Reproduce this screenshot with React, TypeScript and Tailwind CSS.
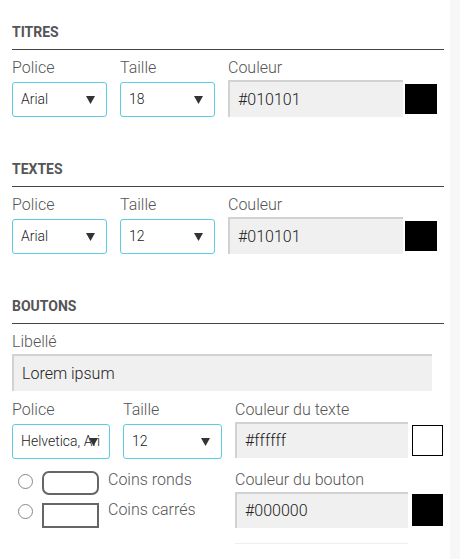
import React from 'react'

const font = { fontFamily: 'Roboto, "Open Sans", Arial, sans-serif' }

function Arrow() {
  return (
    <svg className="absolute right-[11px] top-1/2 -translate-y-1/2" width="9" height="8" viewBox="0 0 9 8">
      <polygon points="0,0 9,0 4.5,8" fill="#333" />
    </svg>
  )
}

function Select({ value, width }: { value: string; width: string }) {
  return (
    <div className={`relative h-[35px] mt-1 ${width} rounded-[3px] border border-[#5ccbe4] bg-white flex items-center pl-2`}>
      <span className="text-[14px] font-light text-[#222] whitespace-nowrap">{value}</span>
      <Arrow />
    </div>
  )
}

function ColorInput({ value, width, swatch }: { value: string; width: string; swatch: string }) {
  return (
    <div className="flex items-center gap-[2px]">
      <div className={`h-[37px] ${width} bg-[#f0f0f0] border-t-2 border-l-2 border-[#d2d2d2] flex items-center pl-2 text-[16px] font-light text-[#222]`}>
        {value}
      </div>
      <div className={`w-[32px] h-[30px] ${swatch}`} />
    </div>
  )
}

function Heading({ title }: { title: string }) {
  return (
    <div className="pb-[9px] border-b border-[#444] text-[14px] leading-4 font-bold text-[#555]">{title}</div>
  )
}

function Label({ children }: { children: React.ReactNode }) {
  return <div className="text-[16px] leading-5 font-light text-[#555]">{children}</div>
}

function FontSection({ title, police, taille }: { title: string; police: string; taille: string }) {
  return (
    <div>
      <Heading title={title} />
      <div className="mt-2 flex gap-[13px]">
        <div>
          <Label>Police</Label>
          <Select value={police} width="w-[95px]" />
        </div>
        <div>
          <Label>Taille</Label>
          <Select value={taille} width="w-[95px]" />
        </div>
        <div>
          <Label>Couleur</Label>
          <div className="mt-0.5">
            <ColorInput value="#010101" width="w-[175px]" swatch="bg-black" />
          </div>
        </div>
      </div>
    </div>
  )
}

export default function App() {
  return (
    <div className="flex h-[559px] bg-white" style={font}>
      <div className="w-[450px] pl-3 pr-[6px] pt-6 bg-white">
        <FontSection title="TITRES" police="Arial" taille="18" />
        <div className="mt-11">
          <FontSection title="TEXTES" police="Arial" taille="12" />
        </div>

        <div className="mt-11">
          <Heading title="BOUTONS" />
          <div className="mt-2">
            <Label>Libellé</Label>
            <div className="mt-0.5 h-[37px] w-[420px] bg-[#f0f0f0] border-t-2 border-l-2 border-[#d2d2d2] flex items-center pl-2 text-[16px] font-light text-[#222]">
              Lorem ipsum
            </div>
          </div>

          <div className="mt-[9px] flex gap-[13px]">
            <div className="w-[210px]">
              <div className="flex gap-[13px]">
                <div>
                  <Label>Police</Label>
                  <Select value="Helvetica, Ari" width="w-[98px]" />
                </div>
                <div>
                  <Label>Taille</Label>
                  <Select value="12" width="w-[99px]" />
                </div>
              </div>

              <div className="mt-3 flex flex-col gap-2">
                <div className="flex items-start">
                  <span className="mt-[3px] ml-[6px] w-[15px] h-[15px] rounded-full border border-[#888] bg-white" />
                  <span className="ml-[9px] w-[57px] h-[24px] rounded-[7px] border-2 border-[#666]" />
                  <span className="ml-[9px] -mt-px text-[16px] leading-5 font-light text-[#555]">Coins ronds</span>
                </div>
                <div className="flex items-start">
                  <span className="mt-px ml-[6px] w-[15px] h-[15px] rounded-full border border-[#888] bg-white" />
                  <span className="ml-[9px] w-[57px] h-[25px] border-2 border-[#666]" />
                  <span className="ml-[9px] -mt-[3px] text-[16px] leading-5 font-light text-[#555]">Coins carrés</span>
                </div>
              </div>
            </div>

            <div>
              <Label>Couleur du texte</Label>
              <div className="mt-0.5 flex items-center gap-1">
                <div className="h-[36px] w-[173px] bg-[#f0f0f0] border-t-2 border-l-2 border-[#d2d2d2] flex items-center pl-2 text-[16px] font-light text-[#222]">
                  #ffffff
                </div>
                <div className="w-[31px] h-[31px] bg-white border border-black" />
              </div>

              <div className="mt-3">
                <Label>Couleur du bouton</Label>
                <div className="mt-0.5 flex items-center gap-1">
                  <div className="h-[36px] w-[173px] bg-[#f0f0f0] border-t-2 border-l-2 border-[#d2d2d2] flex items-center pl-2 text-[16px] font-light text-[#222]">
                    #000000
                  </div>
                  <div className="w-[31px] h-[32px] bg-black" />
                </div>
              </div>
              <div className="mt-[15px] h-px w-[173px] bg-[#eeeeee]" />
            </div>
          </div>
        </div>
      </div>
      <div className="flex-1 bg-[#f7f7f7]" />
    </div>
  )
}
